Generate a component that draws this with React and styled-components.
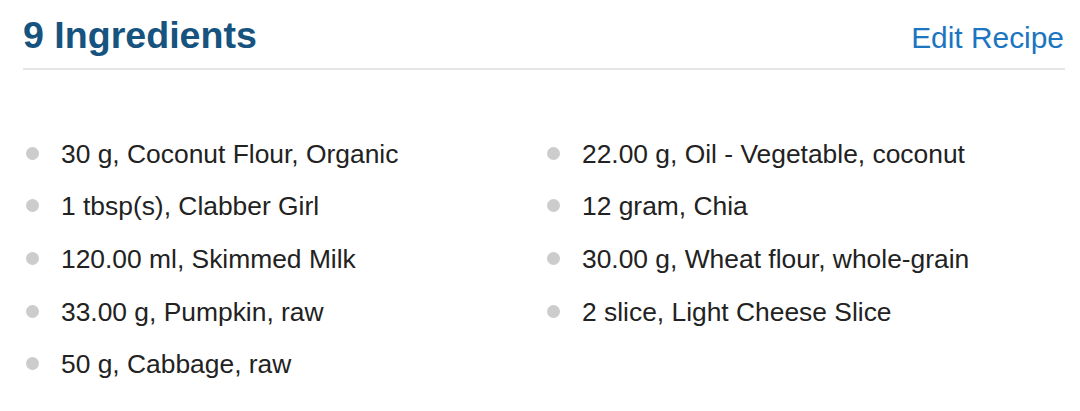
import styled, { createGlobalStyle } from "styled-components";

const ingredients = [
  "30 g, Coconut Flour, Organic",
  "22.00 g, Oil - Vegetable, coconut",
  "1 tbsp(s), Clabber Girl",
  "12 gram, Chia",
  "120.00 ml, Skimmed Milk",
  "30.00 g, Wheat flour, whole-grain",
  "33.00 g, Pumpkin, raw",
  "2 slice, Light Cheese Slice",
  "50 g, Cabbage, raw",
];

export default function App() {
  return (
    <>
      <GlobalStyle />
      <Section>
        <Header>
          <Title>{ingredients.length} Ingredients</Title>
          <EditLink href="#">Edit Recipe</EditLink>
        </Header>
        <List>
          {ingredients.map((item, i) => (
            <Item key={i}>{item}</Item>
          ))}
        </List>
      </Section>
    </>
  );
}

const GlobalStyle = createGlobalStyle`
  html, body {
    margin: 0;
    padding: 0;
    background: #fff;
  }
  body {
    font-family: "Liberation Sans", Arial, sans-serif;
  }
`;

const Section = styled.section`
  width: 1042px;
  padding: 17px 0 0 23px;
`;

const Header = styled.header`
  display: flex;
  align-items: baseline;
  justify-content: space-between;
  padding-bottom: 13px;
  border-bottom: 2px solid #e6e6e6;
`;

const Title = styled.h2`
  margin: 0;
  font-size: 37.6px;
  line-height: 1;
  font-weight: 700;
  color: #16537e;
`;

const EditLink = styled.a`
  font-size: 29.9px;
  line-height: 1;
  color: #1b75c0;
  text-decoration: none;
  margin-right: 1px;
`;

const List = styled.ul`
  list-style: none;
  margin: 0;
  padding: 58px 0 0;
  display: grid;
  grid-template-columns: 521px 521px;
`;

const Item = styled.li`
  position: relative;
  padding-left: 38px;
  font-size: 26.4px;
  line-height: 52.7px;
  color: #222;

  &::before {
    content: "";
    position: absolute;
    left: 3px;
    top: 19px;
    width: 13px;
    height: 13px;
    border-radius: 50%;
    background: #cccccc;
  }
`;
